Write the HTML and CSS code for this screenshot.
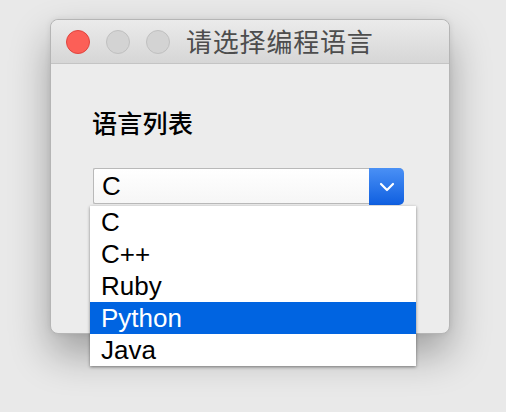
FILE: index.html
```html
<!DOCTYPE html>
<html lang="zh">
<head>
<meta charset="utf-8">
<link rel="stylesheet" href="styles.css">
</head>
<body>
<div class="stage">
  <div class="window">
    <div class="titlebar">
      <div class="lights">
        <span class="light red"></span>
        <span class="light gray"></span>
        <span class="light gray"></span>
      </div>
      <div class="title">请选择编程语言</div>
    </div>
    <div class="content">
      <div class="label">语言列表</div>
      <div class="select">
        <div class="value">C</div>
        <div class="arrow">
          <svg width="16" height="10" viewBox="0 0 16 10"><path d="M2 2 L8 8 L14 2" fill="none" stroke="#fff" stroke-width="2.2" stroke-linecap="round" stroke-linejoin="round"/></svg>
        </div>
      </div>
      <ul class="menu">
        <li>C</li>
        <li>C++</li>
        <li>Ruby</li>
        <li class="selected">Python</li>
        <li>Java</li>
      </ul>
    </div>
  </div>
</div>
</body>
</html>
```
FILE: styles.css
```css
html, body {
  margin: 0;
  padding: 0;
}
body {
  width: 506px;
  height: 412px;
  background: #e9e9e9;
  overflow: hidden;
  font-family: "Liberation Sans", "Noto Sans CJK SC", sans-serif;
}
.stage {
  padding: 19px 0 0 50px;
}
.window {
  width: 398px;
  height: 313px;
  border: 1px solid #b5b5b5;
  border-radius: 8px;
  background: #ececec;
  box-shadow: 0 20px 40px rgba(0,0,0,0.32), 0 0 6px rgba(0,0,0,0.08);
  position: relative;
}
.titlebar {
  height: 43px;
  border-bottom: 1px solid #c4c4c4;
  border-radius: 8px 8px 0 0;
  background: linear-gradient(#ebebeb, #d6d6d6);
  display: flex;
  align-items: center;
}
.lights {
  display: flex;
  gap: 16px;
  padding-left: 15px;
}
.light {
  width: 22px;
  height: 22px;
  border-radius: 50%;
  display: block;
}
.light.red {
  background: #fc5f57;
  border: 1px solid #e0443e;
}
.light.gray {
  background: #d3d3d3;
  border: 1px solid #c0c0c0;
}
.title {
  margin-left: 16px;
  font-family: "Noto Sans CJK SC", sans-serif;
  font-size: 26px;
  color: #4d4d4d;
  letter-spacing: 0.8px;
  line-height: 1;
  padding-bottom: 1px;
}
.content {
  padding: 43px 0 0 42px;
  position: relative;
}
.label {
  font-family: "Noto Sans CJK SC", sans-serif;
  font-size: 25px;
  font-weight: 500;
  letter-spacing: 0.3px;
  line-height: 30px;
  color: #000;
  margin-left: -1px;
}
.select {
  margin-top: 31px;
  width: 311px;
  height: 36px;
  display: flex;
  border: 1px solid #b9b9b9;
  border-right: none;
  border-radius: 2px 5px 5px 2px;
  background: linear-gradient(#fff, #f6f6f6);
  box-sizing: border-box;
}
.value {
  flex: 1;
  padding-left: 8px;
  font-size: 26px;
  line-height: 34px;
  color: #000;
}
.arrow {
  width: 35px;
  height: 37px;
  margin-top: -1px;
  border-radius: 0 5px 5px 0;
  background: linear-gradient(#4a90f5, #0f5fe0);
  display: flex;
  align-items: center;
  justify-content: center;
}
.menu {
  position: absolute;
  left: 39px;
  top: 142px;
  width: 326px;
  margin: 0;
  padding: 0;
  list-style: none;
  background: #fff;
  box-shadow: 0 1px 3px rgba(0,0,0,0.45);
}
.menu li {
  height: 32px;
  line-height: 32px;
  padding-left: 11px;
  font-size: 26px;
  color: #000;
}
.menu li.selected {
  background: #0064e1;
  color: #fff;
}
```
